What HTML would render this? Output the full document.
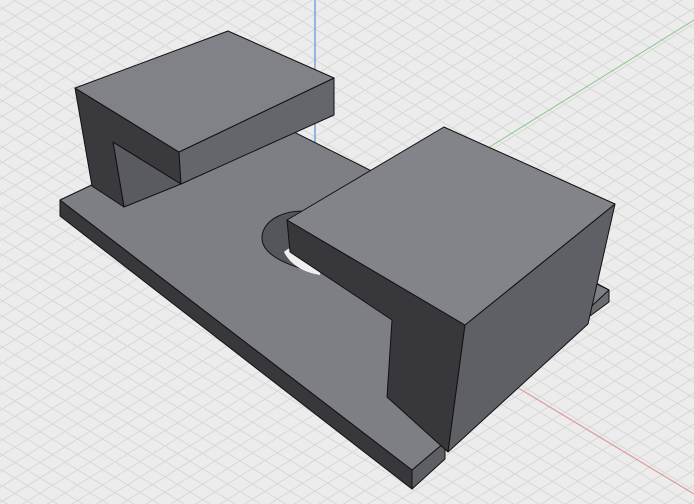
<!DOCTYPE html>
<html><head><meta charset="utf-8"><style>
html,body{margin:0;padding:0;background:#ececec;overflow:hidden;width:694px;height:504px}
svg{display:block}
</style></head><body>
<svg id="s" width="694" height="504" viewBox="0 0 694 504" xmlns="http://www.w3.org/2000/svg">
<rect width="694" height="504" fill="#ececec"/>
<g id="grid" stroke="#d8d8d8" stroke-width="1"></g>
<line x1="488" y1="148" x2="694" y2="20" stroke="#8cc48c" stroke-width="1"/>
<line x1="515" y1="386" x2="694" y2="494" stroke="#e09a9a" stroke-width="1.2"/>
<line x1="315" y1="0" x2="315" y2="205" stroke="#5b8fe0" stroke-width="1.2"/>
<g stroke="#111" stroke-width="1" stroke-linejoin="round">
<polygon points="60,200 60,216 412,489 412,470" fill="#38383c"/>
<polygon points="412,470 412,489 445,459 445,442" fill="#5e5f64"/>
<polygon points="594,282 609,290 609,302 590,316" fill="#6a6b70"/>
<polygon points="60,200 250,110 609,290 445,442 412,470" fill="#7e7f85"/>
<path d="M262,238 C262,218 290,208 310,212 L300,268 C280,262 262,252 262,238Z" fill="#55565b"/>
<path d="M284,252 C292,244 308,244 322,250 L320,275 C302,272 290,264 284,252Z" fill="#efefef" stroke="none"/>
<polygon points="113,142 124,207 181,184" fill="#5a5b60"/>
<polygon points="75,88 179,152 181,184 113,142 124,207 92,186" fill="#3a3a3e"/>
<polygon points="179,152 334,78 334,115 181,184" fill="#65666b"/>
<polygon points="75,88 228,31 334,78 179,152" fill="#818287"/>
<polygon points="287,220 465,325 448,452 387,397 392,320 290,252" fill="#38383c"/>
<polygon points="615,204 465,325 448,452 588,324" fill="#5f6065"/>
<polygon points="287,220 444,127 615,204 465,325" fill="#838489"/>
</g>
</svg>
<script>
var g=document.getElementById('grid'),ns='http://www.w3.org/2000/svg';
var O=[315,260],U=[12.5,7.6],V=[12.5,-7.8];
function P(a,b){return [O[0]+a*U[0]+b*V[0],O[1]+a*U[1]+b*V[1]];}
for(var i=-70;i<=70;i++){
 var a=P(i,-70),b=P(i,70),l=document.createElementNS(ns,'line');
 l.setAttribute('x1',a[0]);l.setAttribute('y1',a[1]);l.setAttribute('x2',b[0]);l.setAttribute('y2',b[1]);g.appendChild(l);
 a=P(-70,i);b=P(70,i);l=document.createElementNS(ns,'line');
 l.setAttribute('x1',a[0]);l.setAttribute('y1',a[1]);l.setAttribute('x2',b[0]);l.setAttribute('y2',b[1]);g.appendChild(l);
}
</script>
</body></html>
